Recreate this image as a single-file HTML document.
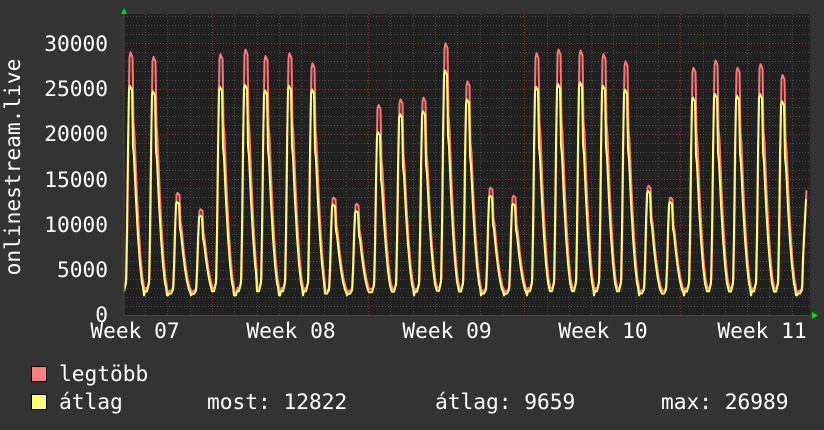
<!DOCTYPE html>
<html><head><meta charset="utf-8"><style>
html,body{margin:0;padding:0;background:#333;width:824px;height:430px;overflow:hidden}
svg{display:block}
text{font-family:"DejaVu Sans Mono","Liberation Mono",monospace;fill:#fff;font-size:21.2px}
</style></head><body>
<svg id="s" width="824" height="430" xmlns="http://www.w3.org/2000/svg">
<rect width="824" height="430" fill="#333"/>
<rect x="124" y="14" width="686" height="302" fill="#212121"/>
<g id="grid"></g>
<path id="mx" fill="none" stroke="#ff7777" stroke-width="2" stroke-linejoin="round"/>
<path id="av" fill="none" stroke="#ffff77" stroke-width="2" stroke-linejoin="round"/>
<line x1="124" y1="14" x2="124" y2="316" stroke="#444" stroke-width="1"/>
<line x1="122" y1="315.5" x2="812" y2="315.5" stroke="#444" stroke-width="1"/>
<polygon points="121,14 127,14 124,8" fill="#0d0"/>
<polygon points="812,312 812,319 818,315.5" fill="#0d0"/>
<g text-anchor="end">
<text x="108" y="51">30000</text>
<text x="108" y="96">25000</text>
<text x="108" y="141">20000</text>
<text x="108" y="187">15000</text>
<text x="108" y="232">10000</text>
<text x="108" y="277">5000</text>
<text x="108" y="322">0</text>
</g>
<text transform="translate(20,167) rotate(-90)" text-anchor="middle">onlinestream.live</text>
<g text-anchor="middle">
<text x="135" y="338">Week 07</text>
<text x="291" y="338">Week 08</text>
<text x="447" y="338">Week 09</text>
<text x="603" y="338">Week 10</text>
<text x="762" y="338">Week 11</text>
</g>
<rect x="31.5" y="366.5" width="15" height="15" fill="#ff7f7f" stroke="#000"/>
<rect x="31.5" y="394.5" width="15" height="15" fill="#ffff7f" stroke="#000"/>
<text x="59" y="381">legtöbb</text>
<text x="59" y="409">átlag</text>
<text x="207" y="409">most: 12822</text>
<text x="435" y="409">átlag: 9659</text>
<text x="661" y="409">max: 26989</text>
</svg>
<script>
var g=document.getElementById('grid'),h='';
function Y(v){return 315.4-v*0.00907;}
for(var v=1000;v<=33000;v+=1000){var y=Math.round(Y(v))+0.5;var red=v%5000==0;
h+='<line x1="124" x2="810" y1="'+y+'" y2="'+y+'" stroke="'+(red?'#7a3a3a':'#4a4a4a')+'" stroke-dasharray="1,2"/>';}
for(var x=122.8;x<810;x+=22.3){var wk=Math.abs(((x-212)/156)-Math.round((x-212)/156))<0.02;var xx=Math.round(x)+0.5;
if(xx<125)continue;h+='<line x1="'+xx+'" x2="'+xx+'" y1="14" y2="316" stroke="'+(wk?'#7a3a3a':'#4a4a4a')+'" stroke-dasharray="1,2"/>';}
g.innerHTML=h;
var P=[[130,29000,25300],[153,28500,24700],[177,13500,12500],[200,11700,11000],[220,28800,25200],[245,29300,25400],[265,28600,24800],[289,28900,25300],[312,27800,24900],[333,13000,12200],[356,12300,11500],[378,23200,20200],[400,23800,22200],[423,24000,22500],[445,30000,27000],[467,25800,23800],[490,14100,13200],[513,13200,12300],[536,28900,25200],[558,29300,25500],[580,29200,25700],[603,28800,25300],[625,28000,24900],[648,14300,13700],[670,13000,12500],[693,27300,24000],[715,28100,24400],[737,27300,24200],[760,27700,24400],[782,26500,23600],[806,13800,12822]];
var K=[[-22,0.02],[-6,0.02],[-4,0.06],[-2.5,0.45],[-1.5,0.97],[0,1],[2,0.98],[2.8,0.72],[4,0.66],[6,0.45],[8,0.28],[10,0.15],[12,0.06],[14,0.02],[30,0.02]];
function shape(d){for(var i=0;i<K.length-1;i++){if(d>=K[i][0]&&d<=K[i+1][0]){var t=(d-K[i][0])/(K[i+1][0]-K[i][0]);return K[i][1]+t*(K[i+1][1]-K[i][1]);}}return 0.02;}
function build(idx,base,off){var s='';for(var x=124;x<=806;x+=1){var best=null,bd=1e9;for(var j=0;j<P.length;j++){var d=x-P[j][0];if(d>=-8&&d<14&&Math.abs(d)<bd){bd=Math.abs(d);best=P[j];}}
var v=base;if(best){v=base+(best[idx]-base)*shape(x-best[0]);}
if(x==806)v=P[30][idx];if(x>=803&&x<806){v=base+(P[30][idx]-base)*(x-801)/5;}
s+=(s?'L':'M')+(x+off)+','+Y(v).toFixed(1);}return s;}
document.getElementById('mx').setAttribute('d',build(1,2500,0.5));
document.getElementById('av').setAttribute('d',build(2,2200,0));
</script>
</body></html>
